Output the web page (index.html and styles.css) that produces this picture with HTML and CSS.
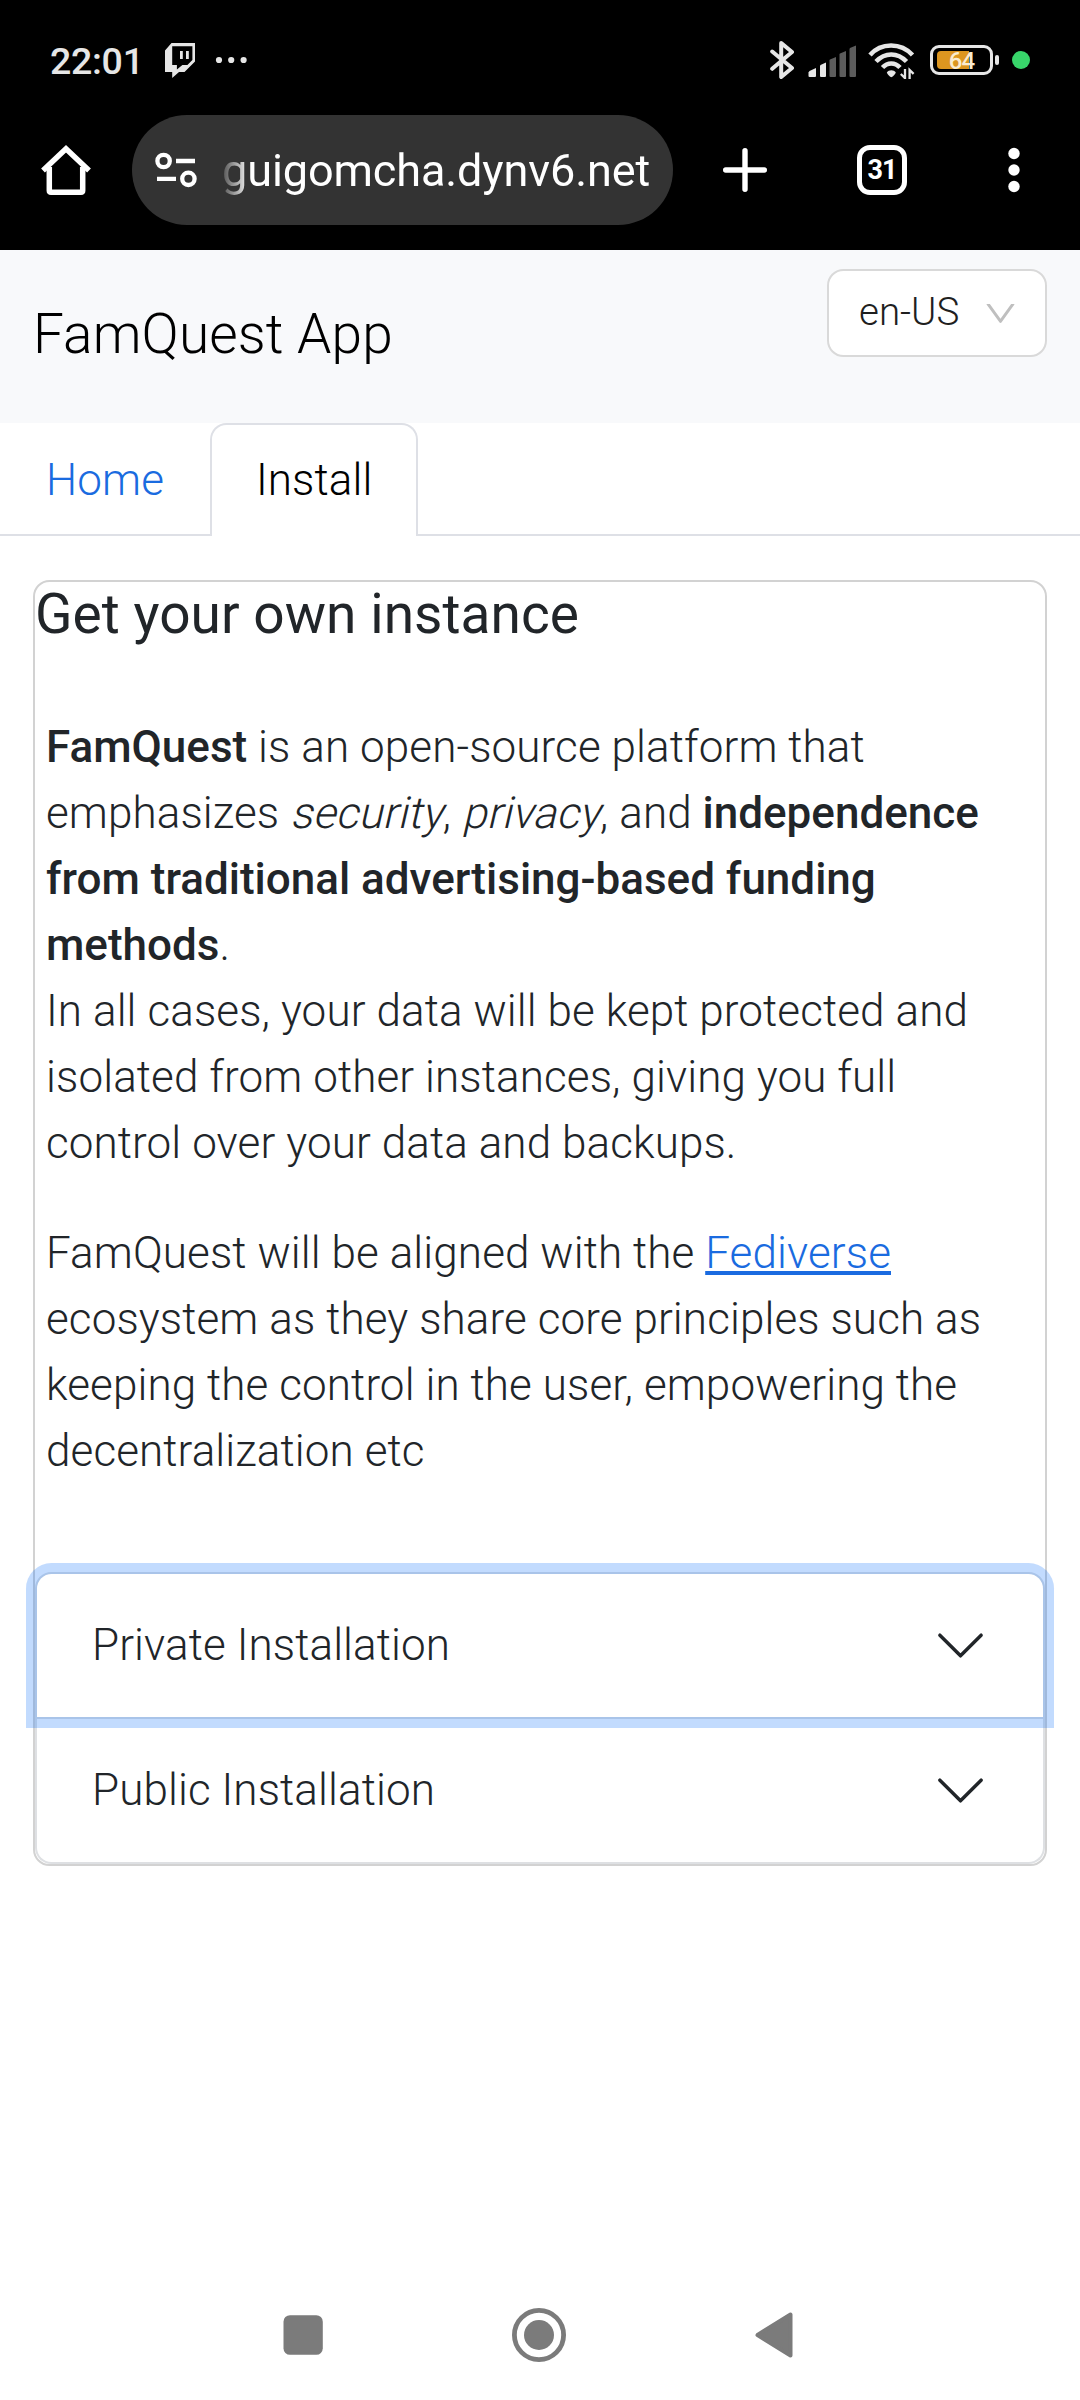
FILE: index.html
```html
<!DOCTYPE html>
<html lang="en">
<head>
<meta charset="utf-8">
<title>FamQuest App</title>
<link rel="stylesheet" href="styles.css">
</head>
<body>
<div class="phone">
  <div class="status-bar">
    <div class="status-left">
      <span class="clock">22:01</span>
      <svg class="twitch" width="30" height="35" viewBox="0 0 30 35"><path fill="#e6e6e6" fill-rule="evenodd" d="M0 7.5 6.5 0H30v18.5L19.5 29H14l-6.800 6V29H0zM7.200 3.300v18.700h4.700v4.500l5.500-4.500h5l5-5V3.300z"/><path fill="#e6e6e6" d="M15 8h2.800v8H15zM21 8h2.800v8H21z"/></svg>
      <svg class="more" width="32" height="8" viewBox="0 0 32 8" fill="#e6e6e6"><circle cx="4" cy="4" r="3.100"/><circle cx="16.200" cy="4" r="3.100"/><circle cx="28.600" cy="4" r="3.100"/></svg>
    </div>
    <div class="status-right">
      <svg width="26" height="40" viewBox="0 0 26 40" fill="none" stroke="#e6e6e6" stroke-width="4" stroke-linecap="round" stroke-linejoin="round"><path d="M2.200 11.500 22 28 11.200 37V3L22 12 2.200 28.800"/></svg>
      <svg class="signal" width="50" height="32" viewBox="0 0 50 32"><g fill="#e6e6e6"><path d="M1.500 26 8 23v8q0 1-1 1H1.500Q.5 32 .5 31v-3.500z"/><path d="M12.500 20 18 17.500V31q0 1-1 1h-4q-1 0-1-1V21z"/></g><g fill="#5c5c5c"><path d="M22 14.500 28 12v19q0 1-1 1h-4.500q-1 0-1-1V15z"/><path d="M32 8.500 38 6v25q0 1-1 1h-4.500q-1 0-1-1V9z"/><path d="M42 3 48 .5V31q0 1-1 1h-4.500q-1 0-1-1V4z"/></g></svg>
      <svg class="wifi" width="48" height="38" viewBox="0 0 48 38" fill="none" stroke="#e6e6e6" stroke-width="4.500"><path d="M2 14C13 1.300 33 1.300 44.500 14M8 20.500c9-9.500 21.500-9.500 30.500 0M14.500 26.500c5-5.500 12.500-5.500 17.500 0"/><path fill="#e6e6e6" stroke="none" d="M18.800 31.500c2-3 7-3 9 0-.8 2-2.500 4-4.500 4.700-2-.7-3.700-2.700-4.500-4.700z"/><path stroke-width="2.300" d="M37 28v10M32.800 33l4 3.800M41.600 38v-9l4 3.800"/></svg>
      <div class="battery"><span class="battery-body"><span class="battery-fill"></span><span class="battery-text">64</span></span><span class="battery-nub"></span></div>
      <span class="privacy-dot"></span>
    </div>
  </div>

  <div class="browser-bar">
    <svg class="home" width="50" height="50" viewBox="0 0 50 50" fill="none" stroke="#fff" stroke-width="5.500" stroke-linejoin="round"><path d="M8.300 22v23.500q0 1.700 1.700 1.700h30q1.700 0 1.700-1.700V22"/><path stroke-linejoin="miter" d="M2 25.500 25 3.800l23 21.700"/></svg>
    <div class="address">
      <svg width="44" height="36" viewBox="0 0 44 36" fill="none" stroke="#fff" stroke-width="4.300"><circle cx="9.600" cy="9" r="6.200"/><path d="M22 9h19M3 26.800h19"/><circle cx="34.400" cy="26.800" r="6.200"/></svg>
      <span class="url">guigomcha.dynv6.net</span>
    </div>
    <svg class="plus" width="46" height="46" viewBox="0 0 46 46" stroke="#fff" stroke-width="5.400" stroke-linecap="round"><path d="M23 3.700v38.600M3.700 23h38.600"/></svg>
    <span class="tab-count">31</span>
    <svg class="menu" width="12" height="46" viewBox="0 0 12 46" fill="#fff"><circle cx="6" cy="6.500" r="5.700"/><circle cx="6" cy="23" r="5.700"/><circle cx="6" cy="39.500" r="5.700"/></svg>
  </div>

  <header class="app-header">
    <span class="brand">FamQuest App</span>
    <div class="language"><span class="language-value">en-US</span><svg width="33" height="33" viewBox="64 64 896 896" fill="#bfbfbf"><path d="M884 256h-75c-5.100 0-9.900 2.500-12.900 6.600L512 654.200 227.900 262.600c-3-4.100-7.800-6.600-12.900-6.600h-75c-6.500 0-10.300 7.400-6.500 12.700l352.600 486.100c12.800 17.600 39 17.600 51.700 0l352.600-486.100c3.900-5.300.1-12.700-6.400-12.700z"/></svg></div>
  </header>

  <nav class="tabs">
    <a class="tab">Home</a>
    <a class="tab active">Install</a>
  </nav>

  <main class="card">
    <h1>Get your own instance</h1>
    <div class="card-text">
      <p><strong>FamQuest</strong> is an open-source platform that emphasizes <em>security</em>, <em>privacy</em>, and <strong>independence from traditional advertising-based funding methods</strong>.<br>In all cases, your data will be kept protected and isolated from other instances, giving you full control over your data and backups.</p>
      <p>FamQuest will be aligned with the <a class="link">Fediverse</a> ecosystem as they share core principles such as keeping the control in the user, empowering the decentralization etc</p>
    </div>
    <div class="accordion">
      <div class="item">
        <div class="item-button focused"><span class="item-title">Private Installation</span><svg width="55" height="55" viewBox="0 0 16 16" fill="none" stroke="#212529" stroke-linecap="round" stroke-linejoin="round"><path d="m2 5 6 6 6-6"/></svg></div>
      </div>
      <div class="item">
        <div class="item-button"><span class="item-title">Public Installation</span><svg width="55" height="55" viewBox="0 0 16 16" fill="none" stroke="#212529" stroke-linecap="round" stroke-linejoin="round"><path d="m2 5 6 6 6-6"/></svg></div>
      </div>
    </div>
  </main>

  <div class="system-nav">
    <svg width="40" height="54" viewBox="0 0 40 54"><rect x=".5" y="7.200" width="39.300" height="39.600" rx="6.500" fill="#7b7b7b"/></svg>
    <svg width="54" height="54" viewBox="0 0 54 54"><circle cx="27" cy="27" r="24.600" fill="none" stroke="#7b7b7b" stroke-width="4.800"/><circle cx="27" cy="27" r="15" fill="#7b7b7b"/></svg>
    <svg width="38" height="54" viewBox="0 0 38 54"><path fill="#7b7b7b" stroke="#7b7b7b" stroke-width="4" stroke-linejoin="round" d="M2.500 27 35.500 6.500v41z"/></svg>
  </div>
</div>
</body>
</html>
```
FILE: styles.css
```css
* { box-sizing: border-box; }

body {
  margin: 0;
  background: #fff;
  color: #212529;
  font: 300 44px/66px Roboto, "Liberation Sans", sans-serif;
  letter-spacing: 0.1px;
}

svg { display: block; flex: none; }

.phone {
  display: flex;
  flex-direction: column;
  width: 1080px;
  height: 2400px;
}

/* System status bar */
.status-bar {
  display: flex;
  justify-content: space-between;
  height: 115px;
  padding: 0 50px;
  background: #000;
  color: #e6e6e6;
}

.status-left,
.status-right {
  display: flex;
  align-items: center;
  height: 120px;
}

.clock {
  width: 115px;
  padding-top: 2px;
  font-size: 37.5px;
  font-weight: 500;
  letter-spacing: -0.3px;
}

.more { margin-left: 20px; }
.signal { margin: 2px 0 0 12px; }
.wifi { margin: 0 0 0 10px; }

.battery {
  display: flex;
  align-items: center;
  gap: 2px;
  margin-left: 14px;
}

.battery-body {
  position: relative;
  width: 63px;
  height: 30px;
  padding: 3px 4px;
  border: 3px solid #e6e6e6;
  border-radius: 9px;
}

.battery-fill {
  display: block;
  width: 32px;
  height: 18px;
  border-radius: 4px 0 0 4px;
  background: #dd9620;
}

.battery-text {
  position: absolute;
  inset: 0;
  color: #faecd0;
  font-size: 24px;
  font-weight: 500;
  letter-spacing: -1px;
  line-height: 26px;
  text-align: center;
}

.battery-nub {
  width: 4px;
  height: 10px;
  border-radius: 2px;
  background: #e6e6e6;
}

.privacy-dot {
  width: 18px;
  height: 18px;
  margin-left: 13px;
  border-radius: 50%;
  background: #38d56a;
}

/* Browser toolbar */
.browser-bar {
  display: flex;
  align-items: center;
  height: 135px;
  padding: 0 60px 25px 41px;
  background: #000;
  color: #fff;
}

.address {
  display: flex;
  align-items: center;
  width: 541px;
  height: 110px;
  margin-left: 41px;
  padding-left: 22px;
  border-radius: 55px;
  background: #333;
}

.url {
  margin-left: 24px;
  padding-top: 1px;
  font-size: 45px;
  font-weight: 400;
  letter-spacing: -0.1px;
  white-space: nowrap;
  -webkit-mask-image: linear-gradient(to right, rgba(0, 0, 0, 0.15), #000 28px);
  mask-image: linear-gradient(to right, rgba(0, 0, 0, 0.15), #000 28px);
}

.plus { margin-left: 49px; }

.tab-count {
  width: 50px;
  height: 50px;
  margin-left: 89px;
  border: 5.5px solid #fff;
  border-radius: 13px;
  font-size: 27px;
  font-weight: 700;
  letter-spacing: -1px;
  line-height: 41px;
  text-align: center;
}

.menu { margin-left: 101px; }

/* Application header */
.app-header {
  display: flex;
  justify-content: space-between;
  align-items: flex-start;
  height: 173px;
  padding: 19px 33px;
  background: #f8f9fb;
}

.brand {
  padding-top: 32px;
  color: #000;
  font-size: 55px;
}

.language {
  display: flex;
  align-items: center;
  justify-content: space-between;
  width: 220px;
  height: 88px;
  padding: 0 28px 0 30px;
  border: 2px solid #d9d9d9;
  border-radius: 16.5px;
  background: #fff;
  color: #1f1f1f;
  font-size: 38.5px;
}

.language-value {
  padding-bottom: 2px;
  letter-spacing: 0;
}

.tabs {
  display: flex;
  height: 113px;
  border-bottom: 2px solid #dee0e6;
}

.tab {
  height: 113px;
  padding: 22px 44px;
  border: 2px solid transparent;
  border-bottom: 0;
  color: #1a6be0;
}

.tab.active {
  width: 208px;
  border-color: #dee0e6;
  border-radius: 16.5px 16.5px 0 0;
  background: #fff;
  color: #000;
}

/* Content card */
.card {
  margin: 44px 33px 0;
  border: 2px solid #d2d2d2;
  border-radius: 16.5px;
}

h1 {
  margin: 0 0 23px;
  font-size: 55px;
  font-weight: 400;
  letter-spacing: 0.05px;
  line-height: 65px;
}

.card-text { padding: 44px 11px 88px; }

p { margin: 0 0 44px; }
p:last-child { margin-bottom: 0; }

strong {
  font-weight: 500;
  letter-spacing: 0;
}

/* Slanted upright letterforms, sheared about the baseline */
em {
  display: inline-block;
  font-style: normal;
  transform: skewX(-13deg);
  transform-origin: 50% 48px;
}

.link {
  color: #1a6be0;
  text-decoration: underline;
}

.item {
  border: 2px solid #dee0e3;
  border-top: 0;
}

.item:first-child {
  border-top: 2px solid #dee0e3;
  border-radius: 16.5px 16.5px 0 0;
}

.item:last-child { border-radius: 0 0 16.5px 16.5px; }

.item-button {
  display: flex;
  align-items: center;
  justify-content: space-between;
  height: 143px;
  padding: 0 55px;
}

.item-title { padding-bottom: 2px; }

.focused {
  position: relative;
  border-radius: 14.5px 14.5px 0 0;
  box-shadow: 0 0 0 11px rgba(13, 110, 253, 0.25);
}

/* System navigation */
.system-nav {
  display: flex;
  align-items: center;
  justify-content: space-between;
  width: 510px;
  height: 130px;
  margin: auto auto 0 283px;
}
```
